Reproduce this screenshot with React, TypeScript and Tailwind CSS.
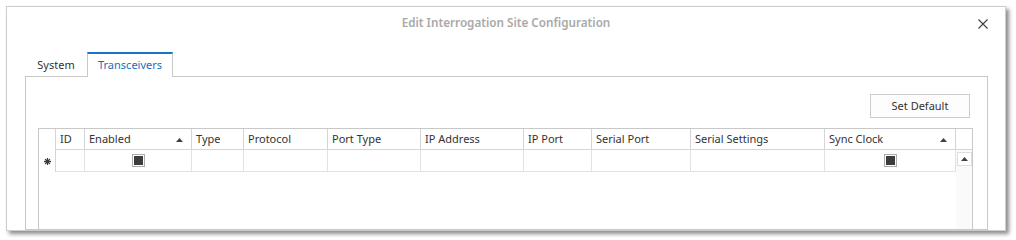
import React from 'react';

const columns = [
  { label: '', w: 'w-[17px]' },
  { label: 'ID', w: 'w-[29px]' },
  { label: 'Enabled', w: 'w-[107px]', sort: true, check: true },
  { label: 'Type', w: 'w-[52px]' },
  { label: 'Protocol', w: 'w-[84px]' },
  { label: 'Port Type', w: 'w-[93px]' },
  { label: 'IP Address', w: 'w-[103px]' },
  { label: 'IP Port', w: 'w-[68px]' },
  { label: 'Serial Port', w: 'w-[99px]' },
  { label: 'Serial Settings', w: 'w-[134px]' },
  { label: 'Sync Clock', w: 'w-[131px]', sort: true, check: true },
];

function SortUp() {
  return (
    <svg width="7" height="4" viewBox="0 0 7 4" className="shrink-0">
      <polygon points="0,4 3.5,0 7,4" fill="#404040" />
    </svg>
  );
}

function Check() {
  return (
    <div className="w-[13px] h-[13px] border border-[#ababab] bg-white p-px">
      <div className="w-full h-full bg-[#3c3c3c]" />
    </div>
  );
}

function NewRowStar() {
  return (
    <svg width="7" height="7" viewBox="0 0 7 7">
      <g stroke="#3a3a3a" strokeWidth="1.3" strokeLinecap="round">
        <line x1="3.5" y1="0.5" x2="3.5" y2="6.5" />
        <line x1="0.5" y1="3.5" x2="6.5" y2="3.5" />
        <line x1="1.4" y1="1.4" x2="5.6" y2="5.6" />
        <line x1="5.6" y1="1.4" x2="1.4" y2="5.6" />
      </g>
      <circle cx="3.5" cy="3.5" r="1.6" fill="#3a3a3a" />
    </svg>
  );
}

export default function App() {
  return (
    <div
      className="w-[1016px] h-[240px] bg-white pl-[6px] pt-[6px] overflow-hidden text-[#333] text-[11px]"
      style={{ fontFamily: '"Segoe UI", "Noto Sans", "Open Sans", sans-serif' }}
    >
      {/* Dialog window */}
      <div className="w-[1000px] h-[225px] bg-white border border-[#cdcdcd] shadow-[3px_3px_4px_rgba(0,0,0,0.45)] flex flex-col overflow-hidden">
        {/* Title bar */}
        <div className="relative h-[30px] flex items-center justify-center shrink-0 pt-[2px]">
          <span className="font-semibold text-[#a9a9a9] text-[11.7px]">Edit Interrogation Site Configuration</span>
          <button className="absolute right-[17px] top-[11px] w-[11px] h-[11px] flex items-center justify-center">
            <svg width="10" height="10" viewBox="0 0 10 10">
              <path d="M0.5 0.5 L9.5 9.5 M9.5 0.5 L0.5 9.5" stroke="#3f3f3f" strokeWidth="1.1" />
            </svg>
          </button>
        </div>

        {/* Tabs */}
        <div className="flex ml-[18px] mt-[15px] -mb-px relative z-10 shrink-0">
          <div className="w-[62px] h-[25px] flex items-center justify-center pt-[2px]">System</div>
          <div className="w-[86px] h-[25px] bg-white border-x border-[#c8c8c8] border-t-2 border-t-[#1a73c8] flex items-center justify-center text-[#1a6cc0]">
            Transceivers
          </div>
        </div>

        {/* Tab panel */}
        <div className="flex-1 ml-[18px] mr-[17px] border border-[#c8c8c8] flex flex-col min-h-0">
          <div className="flex justify-end pt-[17px] pr-[17px] shrink-0">
            <button className="w-[100px] h-[24px] bg-[#fdfdfd] border border-[#cccccc] text-[#333] pt-px">Set Default</button>
          </div>

          {/* Grid */}
          <div className="mt-[10px] ml-[12px] w-[935px] flex-1 border-x border-t border-[#c8c8c8] flex flex-col">
            <div className="flex h-[21px] shrink-0">
              {columns.map((c, i) => (
                <div
                  key={i}
                  className={`${c.w} h-full border-r border-[#d5d5d5] flex items-center pl-[4px] pt-px ${i === 0 ? '' : 'border-b'} ${c.sort ? 'justify-between pr-[8px]' : ''}`}
                >
                  <span>{c.label}</span>
                  {c.sort && <SortUp />}
                </div>
              ))}
              <div className="w-[16px] h-full border-b border-[#d5d5d5]" />
            </div>

            <div className="flex flex-1">
              <div className="flex h-[22px]">
                {columns.map((c, i) => (
                  <div
                    key={i}
                    className={`${c.w} h-full border-r flex items-center justify-center ${i === 0 ? 'border-[#d5d5d5]' : 'border-b border-[#e2e2e2]'}`}
                  >
                    {i === 0 && <NewRowStar />}
                    {c.check && <Check />}
                  </div>
                ))}
              </div>
              <div className="w-[16px] bg-[#fafafa] pt-[2px] flex justify-center ml-auto">
                <div className="w-[15px] h-[14px] border border-[#dedede] bg-white flex items-center justify-center">
                  <SortUp />
                </div>
              </div>
            </div>
          </div>
        </div>
      </div>
    </div>
  );
}
